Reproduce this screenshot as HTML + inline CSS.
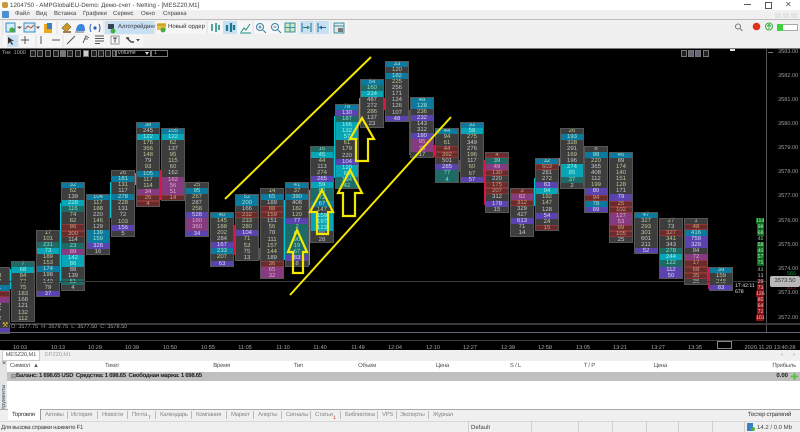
<!DOCTYPE html>
<html><head><meta charset="utf-8"><style>
html,body{margin:0;padding:0;width:800px;height:432px;overflow:hidden;background:#f0f0f0}
body{position:relative;font-family:"Liberation Sans","Noto Sans CJK JP",sans-serif;font-size:6px;color:#333;filter:blur(.25px);text-rendering:geometricPrecision}
div,span,b{position:absolute;white-space:nowrap}
#c{left:0;top:48px;width:800px;height:302px;background:#000;overflow:hidden;border-top:1px solid #777;box-sizing:border-box}
.k{width:24px;background:#3d3d3d;outline:1px solid #565656;outline-offset:-1px;margin-top:-49px}
.k i{display:block;height:6.07px;line-height:6.1px;font-size:6px;text-align:center;font-style:normal;color:#b9c79a}
.k i.w{color:#c4c4c4}
.k i.b{background:#0b7a9e;color:#a8e0d0}
.k i.p{background:#5a43ae;color:#d8d4f4}
.k i.r{background:#6a2b2c;color:#c8a080;box-shadow:inset 0 0 0 .5px #b04040}
.k i.c{background:#07a5b6;color:#a0f0e0}
.k i.t{background:#1e6a66;color:#90d8c0}
.k i.m{background:#863a80;color:#e0a8c8}
.wc,.wr{width:1px;margin-top:-49px}
.wc{background:#00c4d4}.wr{background:#d01840}
.tm{top:296px;color:#a8a8a8;font-size:5.6px;transform:translateX(-50%)}
.pr{left:778px;color:#9a9a9a;font-size:5.6px}
.ld{left:757px;width:7px;height:6px;line-height:6px;font-size:5.2px;text-align:center;color:#c8c8c8}
.ld.g{background:#0a6a1c;color:#b8f0b8}.ld.d{background:#8a1014;color:#f0c0c0}
.bx{top:1px;width:6px;height:7px;border:1px solid #777;box-sizing:border-box;background:#222}
.m{top:11px;color:#444;font-size:6px}
.h{top:363px;color:#555;font-size:6px;letter-spacing:-.25px}
.tb{top:412px;color:#888;font-size:6px;letter-spacing:-.3px}
.sp{top:421px;width:1px;height:11px;background:#d0d0d0}
.sq{top:411px;width:1px;height:8px;background:#bbb}
</style></head><body>
<div style="left:0;top:0;width:800px;height:10px;background:#fff"></div>
<div style="left:2px;top:2px;width:6px;height:6px;background:#c89a3a;border-radius:2px"></div>
<div style="left:10px;top:2px;font-size:6.200px;color:#444">1204750 - AMPGlobalEU-Demo: Демо-счет - Netting - [MESZ20,M1]</div>
<div style="left:744px;top:4px;width:7px;height:1px;background:#555"></div>
<div style="left:765px;top:2px;width:5px;height:5px;border:1px solid #555"></div>
<div style="left:785px;top:0;font-size:8px;color:#555">✕</div>
<div style="left:0;top:10px;width:800px;height:9px;background:#f0f0f0;border-bottom:1px solid #bcbcbc"></div>
<div style="left:2px;top:11px;width:7px;height:7px;background:#4a90d0;border-radius:1px"></div>
<span class="m" style="left:15px">Файл</span><span class="m" style="left:36px">Вид</span><span class="m" style="left:54px">Вставка</span><span class="m" style="left:83px">Графики</span><span class="m" style="left:113px">Сервис</span><span class="m" style="left:141px">Окно</span><span class="m" style="left:163px">Справка</span>
<div style="left:775px;top:13px;width:6px;height:5px;background:#e4e4e4"></div><div style="left:783px;top:13px;width:6px;height:5px;background:#e4e4e4"></div><div style="left:791px;top:13px;width:6px;height:5px;background:#e4e4e4"></div>

<div style="left:3px;top:21px;width:344px;height:13px;background:#f6f6f6"></div>
<div style="left:3px;top:35px;width:140px;height:12px;background:#f6f6f6"></div>
<div style="left:105px;top:21px;width:49px;height:13px;background:#c8e0f4"></div>
<span style="left:118px;top:24px;color:#333;font-size:6px">Алготрейдинг</span>
<span style="left:168px;top:24px;color:#333;font-size:6px">Новый ордер</span>
<div style="left:223px;top:21px;width:14px;height:13px;background:#c8e0f4"></div>
<div style="left:300px;top:21px;width:14px;height:13px;background:#c8e0f4"></div>
<div style="left:315px;top:21px;width:14px;height:13px;background:#c8e0f4"></div>
<div style="left:7px;top:35px;width:11px;height:12px;background:#c8e0f4"></div>
<svg style="position:absolute;left:0;top:20px" width="800" height="28" fill="none">
<path d="M6 3h9v9H6z" stroke="#3a8ac0" fill="#d8ecf8"/><circle cx="12" cy="10" r="2.6" fill="#4aac40"/><path d="M17 6.5h5l-2.5 2.5z" fill="#555"/>
<path d="M24 3h11v9H24z" stroke="#3a8ac0" fill="#d8ecf8"/><path d="M25 9l3-3 3 2 3-3" stroke="#c05030"/><path d="M36 6.500h4l-2 2.500z" fill="#555"/>
<path d="M44 4h8v9h-8z" fill="#e8a820"/><path d="M47 3h5v6h-5z" fill="#3a80c8"/>
<path d="M62 8l5-5 4 4-5 5z" fill="#c89a30" stroke="#806020" stroke-width=".6"/><path d="M63 11h8v2h-8z" fill="#a08050"/>
<path d="M76 11c0-4 2-7 5-7s4 2 4 7z" fill="#3a86d8"/><path d="M75 11h9v2h-9z" fill="#b0b0c0"/>
<circle cx="95" cy="8" r="1.600" fill="#3060b0"/><path d="M91 4q-2 4 0 8M99 4q2 4 0 8" stroke="#3060b0"/>
<path d="M108 4h6v5h-6z" fill="#345"/><circle cx="113" cy="11" r="2.500" fill="#4aac40"/>
<path d="M157 3h9v7h-9z" fill="#e8c040"/><path d="M157 5h9" stroke="#b08820"/><circle cx="163" cy="10" r="2.500" fill="#4aac40"/>
<path d="M212 11V4M216 12V3M219 10V5" stroke="#1a8a80" stroke-width="1.500"/>
<path d="M227 11V5M231 12V3M234 10V5" stroke="#1a7a90" stroke-width="2.200"/>
<path d="M241 12l3-4 2 2 4-6M240 13h11" stroke="#1a8a80"/>
<circle cx="260" cy="7" r="3.500" stroke="#3a80a0"/><path d="M263 10l3 3M258.500 7h3M260 5.500v3" stroke="#3a80a0"/>
<circle cx="275" cy="7" r="3.500" stroke="#3a80a0"/><path d="M278 10l3 3M273.500 7h3" stroke="#3a80a0"/>
<path d="M285 3h10v9h-10zM285 7.500h10M290 3v9" stroke="#3a90a0" fill="#d0e8c0"/>
<path d="M302 3v9M311 3v9M303 7.500h6" stroke="#1a7090"/><path d="M307 5.500l3 2-3 2z" fill="#20a040"/>
<path d="M318 3v9M319 7.500h7" stroke="#1a7090"/><path d="M322 5.500l-3 2 3 2z" fill="#2060b0"/>
<path d="M334 3h10v10h-10z" stroke="#3a90a0" fill="#e0e8e8"/><path d="M334 6h10" stroke="#3a90a0"/><path d="M338 8h5v4h-5z" fill="#777"/>
<path d="M8 17l0 7 2-2 2 3 1-1-2-3h3z" fill="#333"/>
<path d="M25 16v8M21 20h8" stroke="#555"/>
<path d="M41 16v8M52 20h8M67 24l8-8" stroke="#555"/>
<path d="M83 23l3-7 3 2M84 19h4" stroke="#666"/>
<path d="M95 16h9M95 18.500h9M95 21h9M95 23.500h5" stroke="#555"/>
<path d="M111 16h8v8h-8z" stroke="#999"/><path d="M113 18h4M115 18v4.500" stroke="#444"/>
<path d="M126 18l3 0M131 22l3 0M127 18l4 4" stroke="#444" stroke-width="1.500"/><path d="M136 19h4l-2 2.500z" fill="#555"/>
<path d="M3 1v13M57 1v13M104 1v13M155 1v13M207 1v13M253 1v13M298 1v13M331 1v13M18 15v12M36 15v12M63 15v12" stroke="#ddd"/>
<circle cx="738" cy="6.500" r="2.500" stroke="#777"/><path d="M740 8.500l2.500 2.500" stroke="#777"/>
<circle cx="756.500" cy="6.500" r="3.800" fill="#e03018"/>
<circle cx="769" cy="6.500" r="3.500" stroke="#38b040"/><path d="M769 9V4.500M767 6.500l2-2 2 2" stroke="#38b040"/>
<path d="M777.500 4.500h20v6h-20z" stroke="#aaa" fill="#fff"/><path d="M777 4h6v7h-6z" fill="#40d040"/>
</svg>

<div id="c">
<div class="wc" style="left:10px;top:269px;height:20px"></div>
<div class="wc" style="left:60px;top:203px;height:80px"></div><div class="wr" style="left:84px;top:207px;height:10px"></div>
<div class="wc" style="left:110px;top:182px;height:36px"></div><div class="wc" style="left:135px;top:173px;height:12px"></div>
<div class="wr" style="left:160px;top:170px;height:30px"></div><div class="wr" style="left:185px;top:205px;height:30px"></div>
<div class="wc" style="left:210px;top:225px;height:10px"></div><div class="wr" style="left:234px;top:225px;height:30px"></div>
<div class="wr" style="left:259px;top:248px;height:12px"></div><div class="wc" style="left:284px;top:200px;height:60px"></div>
<div class="wc" style="left:309px;top:190px;height:75px"></div><div class="wc" style="left:334px;top:116px;height:62px"></div>
<div class="wc" style="left:359px;top:98px;height:24px"></div><div class="wr" style="left:384px;top:98px;height:12px"></div>
<div class="wr" style="left:409px;top:110px;height:45px"></div><div class="wr" style="left:434px;top:145px;height:12px"></div>
<div class="wr" style="left:459px;top:160px;height:12px"></div><div class="wr" style="left:484px;top:160px;height:45px"></div>
<div class="wc" style="left:534px;top:178px;height:28px"></div><div class="wc" style="left:559px;top:158px;height:8px"></div>
<div class="wr" style="left:584px;top:158px;height:24px"></div><div class="wr" style="left:609px;top:178px;height:58px"></div>
<div class="wr" style="left:634px;top:232px;height:18px"></div><div class="wc" style="left:659px;top:232px;height:30px"></div>
<div class="wr" style="left:684px;top:232px;height:34px"></div><div class="wr" style="left:708px;top:267px;height:22px"></div>

<div class="k" style="left:-14px;top:267px"><i class="w">1</i><i>58</i><i>77</i><i class="b">31</i><i class="r">4</i><i class="m">7</i><i class="w">72</i><i class="w">87</i><i>82</i><i class="w">2</i><i class="p">1</i></div>
<div class="k" style="left:11px;top:261px"><i class="t">7</i><i class="c">68</i><i>84</i><i>77</i><i>75</i><i>183</i><i class="w">168</i><i class="w">121</i><i>132</i><i>112</i></div>
<div class="k" style="left:36px;top:230px"><i>17</i><i>101</i><i class="t">231</i><i class="c">73</i><i>189</i><i>153</i><i class="b">174</i><i class="w">198</i><i class="w">140</i><i class="w">79</i><i class="p">37</i></div>
<div class="k" style="left:61px;top:182px"><i class="b">32</i><i>62</i><i class="w">139</i><i class="c">228</i><i class="t">116</i><i>74</i><i>82</i><i class="r">86</i><i class="r">300</i><i class="w">114</i><i class="t">23</i><i class="m">89</i><i class="c">142</i><i class="c">86</i><i class="w">88</i><i class="w">139</i><i class="t">51</i><i class="w">4</i></div>
<div class="k" style="left:86px;top:194px"><i class="b">104</i><i>117</i><i>188</i><i class="w">220</i><i>146</i><i class="w">129</i><i class="b">139</i><i class="b">159</i><i class="p">328</i><i class="w">16</i></div>
<div class="k" style="left:111px;top:170px"><i>26</i><i class="b">181</i><i>131</i><i class="w">117</i><i class="b">278</i><i>228</i><i class="w">131</i><i class="w">72</i><i>103</i><i class="p">156</i><i class="w">5</i></div>
<div class="k" style="left:136px;top:122px"><i class="b">38</i><i class="w">245</i><i class="c">122</i><i>176</i><i>366</i><i>148</i><i class="w">79</i><i>93</i><i class="b">105</i><i>117</i><i>114</i><i class="m">34</i><i class="r">26</i><i class="r">4</i></div>
<div class="k" style="left:161px;top:128px"><i class="b">105</i><i class="c">122</i><i>62</i><i class="w">137</i><i>95</i><i>115</i><i>60</i><i class="w">162</i><i class="m">162</i><i class="m">56</i><i class="m">51</i><i class="r">14</i></div>
<div class="k" style="left:185px;top:182px"><i>25</i><i class="b">95</i><i>267</i><i class="w">287</i><i>258</i><i class="p">528</i><i class="m">160</i><i class="m">360</i><i class="p">34</i></div>
<div class="k" style="left:210px;top:212px"><i class="b">40</i><i>145</i><i>188</i><i>202</i><i class="w">284</i><i class="p">167</i><i class="b">233</i><i>207</i><i class="p">63</i></div>
<div class="k" style="left:235px;top:194px"><i class="b">52</i><i class="b">200</i><i class="w">166</i><i class="r">232</i><i>233</i><i>280</i><i class="p">104</i><i>71</i><i>53</i><i class="w">75</i><i class="w">13</i></div>
<div class="k" style="left:260px;top:188px"><i>14</i><i class="b">65</i><i class="w">189</i><i class="r">88</i><i class="r">159</i><i class="w">151</i><i>56</i><i class="w">78</i><i class="w">111</i><i>157</i><i>144</i><i class="w">189</i><i class="r">36</i><i class="m">65</i><i class="m">32</i></div>
<div class="k" style="left:285px;top:182px"><i class="b">41</i><i>37</i><i class="b">390</i><i class="w">408</i><i>182</i><i>120</i><i class="p">77</i><i class="t">2</i><i class="t">61</i><i class="t">90</i><i class="t">19</i><i class="t">67</i><i class="p">83</i><i class="w">8</i></div>
<div class="k" style="left:310px;top:146px"><i class="t">16</i><i class="c">45</i><i>44</i><i class="w">113</i><i>274</i><i class="p">285</i><i class="c">59</i><i class="t">80</i><i class="t">72</i><i class="b">67</i><i>147</i><i class="c">159</i><i class="c">197</i><i class="c">123</i><i class="w">89</i><i class="w">28</i></div>
<div class="k" style="left:335px;top:104px"><i class="b">78</i><i class="p">130</i><i class="t">187</i><i class="c">166</i><i class="c">132</i><i class="c">57</i><i>61</i><i>179</i><i class="w">220</i><i class="p">104</i><i class="c">120</i><i class="c">68</i><i class="t">184</i><i class="t">42</i></div>
<div class="k" style="left:360px;top:79px"><i class="b">54</i><i class="t">160</i><i class="c">214</i><i class="w">487</i><i class="w">272</i><i>286</i><i class="w">137</i><i class="w">23</i></div>
<div class="k" style="left:385px;top:61px"><i class="b">33</i><i>120</i><i class="b">182</i><i>225</i><i class="w">256</i><i class="w">171</i><i class="w">124</i><i class="w">126</i><i class="w">107</i><i class="p">48</i></div>
<div class="k" style="left:410px;top:97px"><i class="b">48</i><i class="b">128</i><i>236</i><i class="p">232</i><i class="w">143</i><i class="w">312</i><i class="p">180</i><i class="m">95</i><i class="m">75</i><i class="w">17</i></div>
<div class="k" style="left:435px;top:128px"><i class="b">44</i><i>94</i><i>61</i><i class="r">44</i><i class="r">392</i><i class="w">501</i><i class="p">285</i><i class="t">77</i><i class="t">4</i></div>
<div class="k" style="left:460px;top:122px"><i class="b">32</i><i class="c">58</i><i>275</i><i class="w">349</i><i class="w">276</i><i>196</i><i class="w">117</i><i>60</i><i>67</i><i class="p">57</i></div>
<div class="k" style="left:485px;top:152px"><i class="r">4</i><i class="t">39</i><i class="m">49</i><i class="r">130</i><i class="w">220</i><i class="r">175</i><i class="r">207</i><i class="w">312</i><i class="p">178</i><i class="w">15</i></div>
<div class="k" style="left:510px;top:188px"><i class="r">3</i><i class="m">82</i><i class="r">312</i><i class="w">329</i><i class="w">427</i><i class="p">613</i><i class="w">71</i><i class="w">14</i></div>
<div class="k" style="left:535px;top:158px"><i class="b">32</i><i class="r">603</i><i class="w">281</i><i class="w">272</i><i class="p">83</i><i class="c">94</i><i>192</i><i>147</i><i class="w">128</i><i class="p">54</i><i class="w">24</i><i class="r">15</i></div>
<div class="k" style="left:560px;top:128px"><i>26</i><i class="b">193</i><i>328</i><i class="w">291</i><i>169</i><i class="w">196</i><i class="c">274</i><i class="c">85</i><i class="t">37</i><i class="w">2</i></div>
<div class="k" style="left:584px;top:146px"><i>8</i><i class="b">98</i><i>220</i><i class="w">365</i><i class="w">408</i><i class="w">112</i><i>199</i><i class="p">80</i><i class="r">94</i><i class="b">78</i><i class="p">89</i></div>
<div class="k" style="left:609px;top:152px"><i class="b">46</i><i class="w">89</i><i>174</i><i>140</i><i>151</i><i>128</i><i class="w">171</i><i class="p">79</i><i class="r">25</i><i class="r">102</i><i class="m">127</i><i class="m">53</i><i class="r">89</i><i class="r">105</i><i class="w">25</i></div>
<div class="k" style="left:634px;top:212px"><i class="b">47</i><i>327</i><i>293</i><i>301</i><i class="w">601</i><i class="w">211</i><i class="p">52</i></div>
<div class="k" style="left:659px;top:218px"><i>27</i><i class="w">73</i><i class="r">327</i><i>341</i><i class="w">343</i><i class="t">278</i><i class="c">244</i><i class="t">122</i><i class="p">112</i><i class="p">50</i></div>
<div class="k" style="left:684px;top:218px"><i>1</i><i class="r">48</i><i class="b">416</i><i class="p">759</i><i class="p">329</i><i class="w">94</i><i class="m">72</i><i class="r">17</i><i class="r">68</i><i class="r">35</i><i class="w">36</i></div>
<div class="k" style="left:709px;top:267px"><i class="b">39</i><i>159</i><i>248</i><i class="p">83</i></div>

<div style="left:0;top:232px;width:766px;height:1px;background:#3c3c3c"></div>
<div style="left:766px;top:0;width:1px;height:283px;background:#555"></div>
<div style="left:0;top:274px;width:800px;height:2px;background:#3a3a3a"></div>
<div style="left:0;top:283px;width:800px;height:1px;background:#606070"></div>
<div style="left:0;top:291px;width:800px;height:1px;background:#404048"></div>

<div class="bx" style="left:30px"></div><div class="bx" style="left:37px"></div><div class="bx" style="left:45px"></div><div class="bx" style="left:53px"></div><div class="bx" style="left:60px;background:#777"></div><div class="bx" style="left:67px"></div><div class="bx" style="left:75px"></div><div class="bx" style="left:83px;background:#ccc"></div><div class="bx" style="left:91px"></div><div class="bx" style="left:98px"></div><div class="bx" style="left:105px"></div><div class="bx" style="left:112px;width:4px"></div>
<span style="left:2px;top:1px;color:#aaa;font-size:5.500px">Тик&nbsp; 1000</span>
<div style="left:116px;top:1px;width:35px;height:7px;border:1px solid #777;box-sizing:border-box;color:#bbb;font-size:5.500px;line-height:5px;padding-left:1px">volume</div>
<div style="left:145px;top:3px;width:0;height:0;border:2px solid transparent;border-top:3px solid #ddd"></div>
<div style="left:151px;top:1px;width:17px;height:7px;border:1px solid #777;box-sizing:border-box;color:#bbb;font-size:5.500px;line-height:5px;padding-left:2px">1</div>
<div class="bx" style="left:681px"></div><div class="bx" style="left:688px;background:#667"></div><div class="bx" style="left:695px;background:#667"></div><div class="bx" style="left:703px"></div>
<div style="left:730px;top:0;width:5px;height:2px;background:#ddd"></div>
<span style="left:11px;top:275px;color:#9a9aa0;font-size:5.500px">O: 3577.75&nbsp; H: 3579.75&nbsp; L: 3577.50&nbsp; C: 3578.50</span>
<div style="left:2px;top:274px;width:6px;height:6px;color:#e8c040;font-size:7px;line-height:6px">⚒</div>

<span class="pr" style="top:0">3583.00</span><span class="pr" style="top:24px">3582.00</span><span class="pr" style="top:48px">3581.00</span><span class="pr" style="top:72px">3580.00</span><span class="pr" style="top:96px">3579.00</span><span class="pr" style="top:120px">3578.00</span><span class="pr" style="top:144px">3577.00</span><span class="pr" style="top:169px">3576.00</span><span class="pr" style="top:193px">3575.00</span><span class="pr" style="top:217px">3574.00</span><span class="pr" style="top:241px">3573.00</span><span class="pr" style="top:266px">3572.00</span>
<div style="left:768px;top:3px;width:5px;height:1px;background:#777"></div>

<div style="left:735px;top:234px;color:#ddd;font-size:5.200px;line-height:6px;margin-top:0">17:42:11<br>678</div>
<div class="ld g" style="top:169px;left:756px;width:8px">114</div><div class="ld g" style="top:175px">98</div><div class="ld g" style="top:181px">68</div><div class="ld" style="top:187px;color:#9c9">45</div><div class="ld g" style="top:193px">58</div><div class="ld g" style="top:199px">40</div><div class="ld g" style="top:205px">57</div><div class="ld g" style="top:211px">75</div><div class="ld" style="top:218px;color:#9c9">43</div><div class="ld" style="top:224px">13</div><div class="ld d" style="top:230px;background:#4a1416">29</div><div class="ld d" style="top:236px">73</div><div class="ld d" style="top:242px;left:756px;width:8px">126</div><div class="ld d" style="top:248px">85</div><div class="ld d" style="top:254px">64</div><div class="ld d" style="top:260px">72</div><div class="ld d" style="top:266px;left:756px;width:8px">101</div>
<span style="left:787px;top:222px;color:#0c9a30;font-size:5.500px">565</span>
<span style="left:787px;top:236px;color:#b01818;font-size:5.500px">823</span>
<div style="left:770px;top:227px;width:30px;height:11px;background:#b8b8b8;color:#333;font-size:5.800px;line-height:11px;text-align:center;border-radius:2px">3573.50</div>

<span class="tm" style="left:20px">10:03</span><span class="tm" style="left:58px">10:13</span><span class="tm" style="left:95px">10:29</span><span class="tm" style="left:132px">10:39</span><span class="tm" style="left:170px">10:50</span><span class="tm" style="left:208px">10:55</span><span class="tm" style="left:245px">11:05</span><span class="tm" style="left:283px">11:10</span><span class="tm" style="left:320px">11:40</span><span class="tm" style="left:358px">11:49</span><span class="tm" style="left:395px">12:04</span><span class="tm" style="left:433px">12:10</span><span class="tm" style="left:470px">12:27</span><span class="tm" style="left:508px">12:39</span><span class="tm" style="left:545px">12:58</span><span class="tm" style="left:583px">13:05</span><span class="tm" style="left:620px">13:21</span><span class="tm" style="left:658px">13:27</span><span class="tm" style="left:695px">13:35</span>
<div style="left:717px;top:292px;width:15px;height:8px;border:1px solid #888;box-sizing:border-box"></div>
<span class="tm" style="left:770px">2020.11.20 13:40:28</span>

<svg style="position:absolute;left:0;top:-49px" width="800" height="351" fill="none">
<path d="M225 199L371 57M290 295L451 117" stroke="#f2e800" stroke-width="2"/>
<path d="M297 230L307 252H303V273H293V252H288Z" stroke="#f2e800" stroke-width="2.200"/>
<path d="M322 190L333 212H328V234H317V212H310Z" stroke="#f2e800" stroke-width="2.200"/>
<path d="M350 170L362 193H355V216H343V193H338Z" stroke="#f2e800" stroke-width="2.200"/>
<path d="M362 118L374 139H368V161H356V139H350Z" stroke="#f2e800" stroke-width="2.200"/>
</svg>
</div>

<div style="left:2px;top:350px;width:38px;height:11px;background:#fff;border:1px solid #ccc;box-sizing:border-box;text-align:center;line-height:9px;font-size:5.500px;color:#444">MESZ20,M1</div>
<span style="left:45px;top:352px;color:#999;font-size:5.500px">EPZ20,M1</span>
<span style="left:781px;top:352px;color:#888;font-size:6px">‹</span><span style="left:793px;top:352px;color:#888;font-size:6px">›</span>

<div style="left:7px;top:361px;width:793px;height:49px;background:#fff"></div>
<div style="left:0;top:361px;width:7px;height:60px;background:#e4e4e4"></div>
<span style="left:2px;top:360px;font-size:7px;color:#333">×</span>
<div style="left:-13px;top:399px;width:34px;font-size:5.500px;color:#346;transform:rotate(-90deg);text-align:center">Инструменты</div>
<span class="h" style="left:10px">Символ &nbsp;▲</span><span class="h" style="left:105px">Тикет</span><span class="h" style="right:570px">Время</span><span class="h" style="right:497px">Тип</span><span class="h" style="right:424px">Объем</span><span class="h" style="right:351px">Цена</span><span class="h" style="right:279px">S / L</span><span class="h" style="right:205px">T / P</span><span class="h" style="right:133px">Цена</span><span class="h" style="right:4px">Прибыль</span>
<div style="left:7px;top:372px;width:793px;height:9px;background:#c0c0c0"></div>
<span style="left:11px;top:373px;font-size:6px;color:#555">⊟</span>
<b style="left:16px;top:373px;font-size:6px;letter-spacing:-.3px;color:#222">Баланс: 1 698.65 USD&nbsp; Средства: 1 698.65&nbsp; Свободная маржа: 1 698.65</b>
<b style="right:12px;top:373px;font-size:6px;color:#222">0.00</b>
<svg style="position:absolute;left:790px;top:372px" width="9" height="9"><path d="M4.500 1v7M1 4.500h7" stroke="#58c038" stroke-width="1.800"/></svg>
<div style="left:0;top:409px;width:800px;height:1px;background:#aaa"></div>
<div style="left:0;top:410px;width:800px;height:11px;background:#f0f0f0"></div>
<div style="left:8px;top:409px;width:33px;height:11px;background:#fff;border-right:1px solid #999;box-sizing:border-box"></div>
<span class="tb" style="left:12px;color:#333">Торговля</span><span class="tb" style="left:45px">Активы</span><span class="tb" style="left:71px">История</span><span class="tb" style="left:102px">Новости</span><span class="tb" style="left:132px">Почта</span><span style="left:148px;top:415px;color:#d02020;font-size:5px">7</span><span class="tb" style="left:160px">Календарь</span><span class="tb" style="left:196px">Компания</span><span class="tb" style="left:231px">Маркет</span><span class="tb" style="left:258px">Алерты</span><span class="tb" style="left:286px">Сигналы</span><span class="tb" style="left:315px">Статьи</span><span style="left:333px;top:415px;color:#d02020;font-size:5px">1</span><span class="tb" style="left:345px">Библиотека</span><span class="tb" style="left:382px">VPS</span><span class="tb" style="left:400px">Эксперты</span><span class="tb" style="left:433px">Журнал</span><span class="tb" style="right:9px;color:#333">Тестер стратегий</span>
<div class="sq" style="left:67px"></div><div class="sq" style="left:97px"></div><div class="sq" style="left:127px"></div><div class="sq" style="left:155px"></div><div class="sq" style="left:191px"></div><div class="sq" style="left:226px"></div><div class="sq" style="left:253px"></div><div class="sq" style="left:281px"></div><div class="sq" style="left:310px"></div><div class="sq" style="left:340px"></div><div class="sq" style="left:377px"></div><div class="sq" style="left:396px"></div><div class="sq" style="left:428px"></div>
<div style="left:0;top:421px;width:800px;height:1px;background:#d8d8d8"></div>
<span style="left:1px;top:425px;font-size:6px;letter-spacing:-.3px;color:#444">Для вызова справки нажмите F1</span>
<span style="left:471px;top:425px;font-size:6px;color:#444">Default</span>
<div class="sp" style="left:468px"></div><div class="sp" style="left:531px"></div><div class="sp" style="left:578px"></div><div class="sp" style="left:612px"></div><div class="sp" style="left:646px"></div><div class="sp" style="left:678px"></div><div class="sp" style="left:712px"></div><div class="sp" style="left:744px"></div>
<div style="left:747px;top:423px;width:6px;height:8px;background:#3a80c8"></div><div style="left:751px;top:427px;width:4px;height:4px;background:#48b040;border-radius:2px"></div>
<span style="left:757px;top:425px;font-size:6px;color:#444">14.2 / 0.0 Mb</span>
</body></html>
